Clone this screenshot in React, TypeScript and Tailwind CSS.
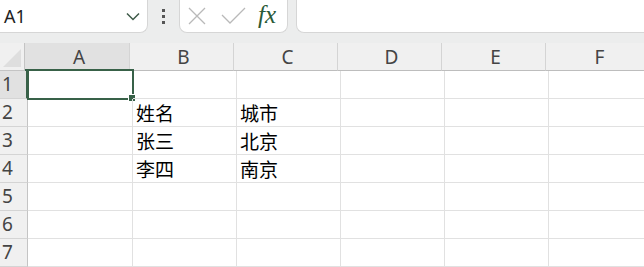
const cols = ["A", "B", "C", "D", "E", "F"]
const rows: string[][] = [
  ["", "", "", "", "", ""],
  ["", "姓名", "城市", "", "", ""],
  ["", "张三", "北京", "", "", ""],
  ["", "李四", "南京", "", "", ""],
  ["", "", "", "", "", ""],
  ["", "", "", "", "", ""],
  ["", "", "", "", "", ""],
]

const colWidth = (i: number) => (i === 0 ? "w-[105px]" : "w-[104px]")

export default function App() {
  return (
    <div className="w-[644px] h-[267px] overflow-hidden bg-white" style={{ fontFamily: '"Noto Sans", "Noto Sans CJK SC", sans-serif' }}>
      {/* Formula bar */}
      <div className="h-[43px] bg-[#eceded] flex items-start">
        <div className="w-[148px] h-[33px] bg-white rounded-br-lg border-r border-b border-[#d6d6d6] flex items-center justify-between pl-[4px] pr-[7px]">
          <span className="text-[18px] text-[#222] leading-none">A1</span>
          <svg width="14" height="9" viewBox="0 0 14 9" fill="none">
            <path d="M1 1.5 L7 7.5 L13 1.5" stroke="#3e5a48" strokeWidth="1.5" />
          </svg>
        </div>
        <div className="w-[31px] h-[33px] flex flex-col items-center justify-center gap-[3px]">
          <div className="w-[3px] h-[3px] bg-[#555]" />
          <div className="w-[3px] h-[3px] bg-[#555]" />
          <div className="w-[3px] h-[3px] bg-[#555]" />
        </div>
        <div className="w-[109px] h-[33px] bg-white rounded-b-lg border-l border-r border-b border-[#d6d6d6] flex items-center pl-[7px] gap-[14px]">
          <svg width="20" height="20" viewBox="0 0 20 20" fill="none">
            <path d="M2 2 L18 18 M18 2 L2 18" stroke="#b9b9b9" strokeWidth="1.3" />
          </svg>
          <svg width="25" height="18" viewBox="0 0 25 18" fill="none">
            <path d="M1 8 L9 16 L24 1" stroke="#b9b9b9" strokeWidth="1.3" />
          </svg>
          <span className="text-[25px] italic text-[#2a5a38] leading-none -mt-[4px] -ml-[2px]" style={{ fontFamily: '"Liberation Serif", serif' }}>
            fx
          </span>
        </div>
        <div className="w-[8px]" />
        <div className="flex-1 h-[33px] bg-white rounded-bl-lg border-l border-b border-[#d6d6d6]" />
      </div>

      {/* Column headers */}
      <div className="flex h-[28px]">
        <div className="w-[28px] h-full bg-[#f0f0f0] border-r border-b border-[#c4c4c4] flex items-end justify-end p-[3px]">
          <svg width="18" height="18" viewBox="0 0 18 18">
            <path d="M18 0 L18 18 L0 18 Z" fill="#dedede" />
          </svg>
        </div>
        {cols.map((c, i) => (
          <div
            key={c}
            className={`${colWidth(i)} shrink-0 h-full flex items-center justify-center pl-[4px] text-[19px] text-[#444] border-r border-[#d4d4d4] ${
              i === 0 ? "bg-[#e1e1e1] border-b-2 border-b-[#386148]" : "bg-[#f0f0f0] border-b border-b-[#bdbdbd]"
            }`}
          >
            <span className="pt-[2px]">{c}</span>
          </div>
        ))}
      </div>

      {/* Grid rows */}
      {rows.map((r, ri) => (
        <div key={ri} className="flex h-[28px]">
          <div
            className={`w-[28px] shrink-0 h-full flex items-end pl-[2px] pb-[1px] text-[19px] leading-none text-[#444] border-b border-[#d4d4d4] ${
              ri === 0 ? "bg-[#e1e1e1] border-r-2 border-r-[#386148]" : "bg-[#f0f0f0] border-r border-r-[#c4c4c4]"
            }`}
          >
            <span className="pb-[3px]">{ri + 1}</span>
          </div>
          {r.map((v, ci) => (
            <div
              key={ci}
              className={`${colWidth(ci)} shrink-0 h-full relative border-r border-b border-[#e1e1e1] flex items-end pl-[3px] pb-[2px] text-[19px] leading-none text-black`}
            >
              {v}
              {ri === 0 && ci === 0 && (
                <div className="absolute -top-[2px] -left-[1px] -right-[2px] -bottom-[2px] border-2 border-[#386148]">
                  <div className="absolute -right-[4px] -bottom-[4px] w-[6px] h-[6px] bg-[#386148] border border-white box-content" />
                </div>
              )}
            </div>
          ))}
        </div>
      ))}
    </div>
  )
}
